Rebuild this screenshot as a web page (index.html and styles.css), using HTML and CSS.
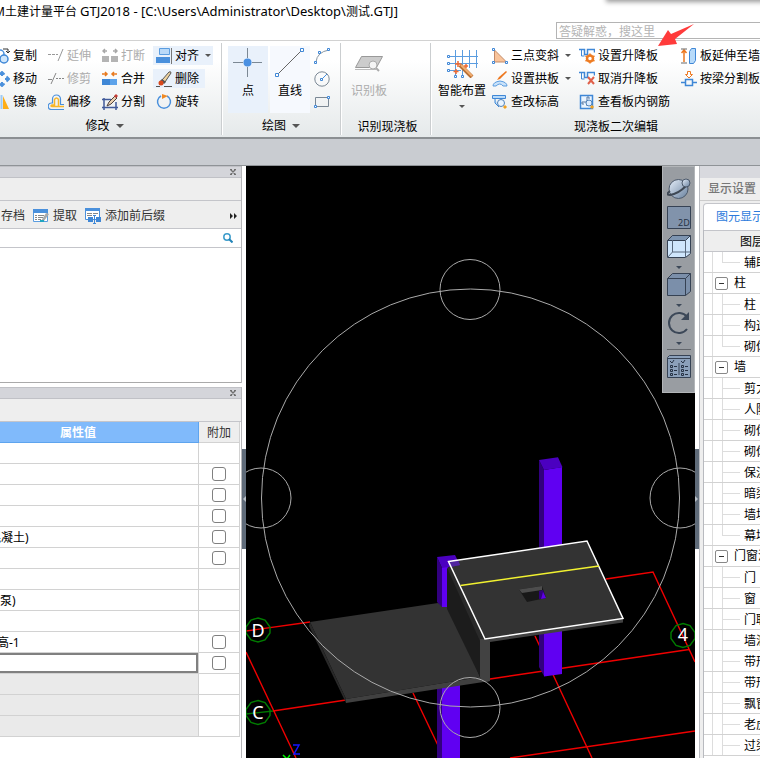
FILE: index.html
```html
<!DOCTYPE html>
<html lang="zh-CN">
<head>
<meta charset="utf-8">
<title>GTJ2018</title>
<link rel="stylesheet" href="styles.css">
</head>
<body>
<header class="titlebar">
  <h1 class="title">M土建计量平台 <span class="path">GTJ2018 - [C:\Users\Administrator\Desktop\</span>测试<span class="path">.GTJ]</span></h1>
  <div class="search-row"><input class="help-search" type="text" aria-label="搜索" placeholder="答疑解惑，搜这里"></div>
  <div class="top-shadow"></div>
</header>

<nav class="ribbon">
  <section class="group group-modify">
    <div class="tools modify-grid">
      <button class="tool"><svg class="icon" viewBox="0 0 16 16"><circle cx="6" cy="6" r="4" fill="#fff" stroke="#4a90dc" stroke-width="1.5"/><circle cx="10" cy="11" r="4" fill="#cfe6fb" stroke="#3f87d6" stroke-width="1.5"/><path d="M9 1h5v4M12 3l2 2 2-2" fill="none" stroke="#333"/></svg>复制</button>
      <button class="tool off"><svg class="icon" viewBox="0 0 16 16"><path d="M0 6.500h3M4 6.500h3M8 6.500h2M10 13l5-12" fill="none" stroke="#999"/></svg>延伸</button>
      <button class="tool off"><svg class="icon" viewBox="0 0 16 16"><path d="M0 8h7v6H0zM9 8h7v6H9z" fill="#b4b4b4"/><path d="M1 3h4M3 1L1 3l2 2M11 3h4M13 1l2 2-2 2" fill="none" stroke="#a8a8a8" stroke-width="1.500"/></svg>打断</button>
      <button class="tool hot split"><svg class="icon" viewBox="0 0 16 16"><path d="M3.500.500h10v6h-10z" fill="#b9d9f8" stroke="#5b9de0"/><path d="M0 9h14v6H0z" fill="#4a90dc"/><path d="M15.500 0v16" stroke="#777"/></svg>对齐<i class="caret"></i></button>
      <button class="tool"><svg class="icon" viewBox="0 0 16 16"><path d="M8 1v4M8 15v-4M1 8h4M15 8h-4M5.500 3.500L8 1l2.500 2.500M5.500 12.500L8 15l2.500-2.500M12.500 5.500L15 8l-2.500 2.500" fill="none" stroke="#4a90dc" stroke-width="2"/></svg>移动</button>
      <button class="tool off"><svg class="icon" viewBox="0 0 16 16"><path d="M0 8.500h4M3 13L8 2M8 7.500h2M11 7.500h2M14 7.500h2" fill="none" stroke="#888"/></svg>修剪</button>
      <button class="tool"><svg class="icon" viewBox="0 0 16 16"><path d="M0 8h8v6H0z" fill="#3f87d6"/><path d="M8 8h7v6H8z" fill="#5da3ea"/><path d="M0 3h4M3 1l2 2-2 2M15 3h-4M12 1l-2 2 2 2" fill="none" stroke="#e87a1f" stroke-width="1.500"/></svg>合并</button>
      <button class="tool hot"><svg class="icon" viewBox="0 0 16 16"><path d="M6 9L13 1q2-1 2 1L9 11z" fill="#efd3a0" stroke="#555"/><path d="M6 8l4 3-2 2-4-3z" fill="#555"/><circle cx="5" cy="12" r="2.500" fill="#d8481c"/><path d="M0 15.500h4M8 15.500h8" stroke="#555"/></svg>删除</button>
      <button class="tool"><svg class="icon" viewBox="0 0 16 16"><path d="M7.500 1v14" stroke="#9ecbf4" stroke-width="2"/><path d="M9 2v13h6z" fill="#ffae17"/></svg>镜像</button>
      <button class="tool"><svg class="icon" viewBox="0 0 16 16"><path d="M16 10.500h-3.500V5a4 4 0 0 0-8 0v4H3.500a3 3 0 0 0 0 6.500H16" fill="none" stroke="#4a90dc" stroke-width="1.200"/><path d="M16 12.500H10.500V5.500q-2-3-4 0v5.500H4q-2 1 0 1.500h7" fill="none" stroke="#f7b62a" stroke-width="1.500"/></svg>偏移</button>
      <button class="tool"><svg class="icon" viewBox="0 0 16 16"><path d="M2 4v12M0 5.500h9M0 13.500h16M14 8v8" fill="none" stroke="#425b9b" stroke-width="1.500"/><path d="M5 12l2-4 6-6 2 2-6 6z" fill="#ead0b0" stroke="#4d4140"/><path d="M12 2l2-2 2 2-2 2z" fill="#c43c35"/></svg>分割</button>
      <button class="tool"><svg class="icon" viewBox="0 0 16 16"><path d="M5 2a6.500 6.500 0 1 0 6 0" fill="none" stroke="#4a90dc" stroke-width="1.500"/><path d="M6 0l6 2-6 3z" fill="#f08a24"/></svg>旋转</button>
    </div>
    <h2 class="group-label">修改<i class="caret big"></i></h2>
  </section>

  <section class="group group-draw">
    <div class="tools draw-tools">
      <button class="large hot"><svg class="icon-lg" viewBox="0 0 32 32"><path d="M15.500 2v10M15.500 21v10M1 16.500h10M20 16.500h10" stroke="#7b8894"/><circle cx="15.500" cy="16.500" r="4" fill="#4a90e2"/></svg>点</button>
      <button class="large warm"><svg class="icon-lg" viewBox="0 0 32 32"><path d="M4 28L28 4" stroke="#666"/><path d="M1.500 27.500h3v3h-3zM26.500 2.500h3v3h-3z" fill="#fff" stroke="#3f87d6"/></svg>直线</button>
      <div class="draw-mini">
        <button class="mini" aria-label="弧"><svg class="icon" viewBox="0 0 16 16"><path d="M2 14Q3 4 15 2" fill="none" stroke="#8795a1"/><path d="M.500 13.500h2v2h-2zM4.500 3.500h2v2h-2zM13.500.500h2v2h-2z" fill="#fff" stroke="#3f87d6"/></svg></button>
        <button class="mini" aria-label="圆"><svg class="icon" viewBox="0 0 16 16"><circle cx="8" cy="8" r="7.200" fill="none" stroke="#7b8894"/><path d="M8 8l5-5" stroke="#4a90dc"/><path d="M6.500 7.500h2v2h-2z" fill="#fff" stroke="#3f87d6"/></svg></button>
        <button class="mini" aria-label="矩形"><svg class="icon" viewBox="0 0 16 16"><path d="M1.500 3.500h13v9h-13z" fill="none" stroke="#7b8894"/><path d="M.500 11.500h2v2h-2zM13.500 2.500h2v2h-2z" fill="#fff" stroke="#3f87d6"/></svg></button>
      </div>
    </div>
    <h2 class="group-label">绘图<i class="caret big"></i></h2>
  </section>

  <section class="group group-detect">
    <div class="tools">
      <button class="large off"><svg class="icon-lg" viewBox="0 0 32 32"><path d="M8.500 10.500h21l-6 11h-21z" fill="#ccc" stroke="#999"/><path d="M2 23.500h21" stroke="#bbb"/><circle cx="20" cy="19" r="4" fill="#f4f4f4" stroke="#aaa"/><path d="M23 22l3 3" stroke="#aaa" stroke-width="2"/></svg>识别板</button>
    </div>
    <h2 class="group-label low">识别现浇板</h2>
  </section>

  <section class="group group-edit">
    <div class="tools edit-tools">
      <button class="large smart"><svg class="icon-lg" viewBox="0 0 32 32"><path d="M9.500 4v25M16.500 4v25M23.500 4v18M30.500 4v18M3 10.500h29M3 17.500h29M3 24.500h12" fill="none" stroke="#5b9de0"/><path d="M1.500 9.500h2v2h-2zM1.500 16.500h2v2h-2zM1.500 23.500h2v2h-2zM8.500 29.500h2v2h-2zM15.500 29.500h2v2h-2z" fill="#fff" stroke="#3f87d6"/><path d="M14 19l12 12" stroke="#b86f34" stroke-width="4"/><path d="M15 19l11 11" stroke="#f1ad70" stroke-width="2"/><path d="M12 15v6M9 18h6M10 23v5M7.500 25.500h5M20 18v4M18 20h4" stroke="#ef6a30" stroke-width="1.500"/></svg>智能布置<i class="caret"></i></button>
      <div class="edit-grid">
        <button class="tool split"><svg class="icon" viewBox="0 0 16 16"><path d="M2.500 2v12h12z" fill="#f9c49b" stroke="#c38b69"/><path d="M.500.500h2v2h-2zM.500 13.500h2v2h-2zM13.500 13.500h2v2h-2z" fill="#fff" stroke="#3f87d6"/></svg>三点变斜<i class="caret"></i></button>
        <button class="tool"><svg class="icon" viewBox="0 0 16 16"><path d="M0 1.500h5.500v5h3v-5h7v3" fill="none" stroke="#3f87d6" stroke-width="1.500"/><path d="M2.500 2v6h3" fill="none" stroke="#3f87d6"/><circle cx="11" cy="10.500" r="3" fill="#fff" stroke="#ee7c22" stroke-width="2.500"/><path d="M11 5.500v2M11 13.500v2M6.500 8l2 1M6.500 13l2-1M15.500 8l-2 1M15.500 13l-2-1" stroke="#ee7c22" stroke-width="1.500"/></svg>设置升降板</button>
        <button class="tool"><svg class="icon" viewBox="0 0 16 16"><path d="M3 14V3M.500 5L3 2l2.500 3" fill="none" stroke="#ed7820" stroke-width="1.500"/><path d="M0 1h6M0 15h6" stroke="#666"/><path d="M8.500 15.500V3.500l2-3h4v12l-2 3z" fill="#b8dbfa" stroke="#3f87d6"/></svg>板延伸至墙</button>
        <button class="tool split"><svg class="icon" viewBox="0 0 16 16"><path d="M1 15q0-4 7-5 7 1 7 5h-4q-3-4-7 0z" fill="#c9e2fa" stroke="#5b9de0"/><path d="M5 9l2-3 7-6 1 1-7 7z" fill="#ed7820"/></svg>设置拱板<i class="caret"></i></button>
        <button class="tool"><svg class="icon" viewBox="0 0 16 16"><path d="M0 1.500h5.500v5h3v-5h7v3" fill="none" stroke="#3f87d6" stroke-width="1.500"/><path d="M2.500 2v6h3" fill="none" stroke="#3f87d6"/><path d="M9 6l6 7M15 6l-6 7" stroke="#e0604a" stroke-width="2"/></svg>取消升降板</button>
        <button class="tool"><svg class="icon" viewBox="0 0 16 16"><path d="M6.500.500h3v3h2L8 7 4.500 3.500h2z" fill="#fff" stroke="#ed7820"/><path d="M0 11.500h4M12 11.500h4M4.500 8.500h7v6h-7z" fill="none" stroke="#3f87d6" stroke-width="1.500"/></svg>按梁分割板</button>
        <button class="tool"><svg class="icon" viewBox="0 0 16 16"><path d="M.500 1.500h13v3h-13zM3 5v4l4 4" fill="#b8dbfa" stroke="#3f87d6"/><circle cx="9" cy="9" r="3.500" fill="#e9f4ff" stroke="#5182b8"/><path d="M12 12l2 2" stroke="#f0a020" stroke-width="3"/></svg>查改标高</button>
        <button class="tool"><svg class="icon" viewBox="0 0 16 16"><path d="M1.500 1.500h12v13h-12z" fill="#eaf4ff" stroke="#3f87d6" stroke-width="1.500"/><path d="M3 8h6M8 3v9M8 3h2v2M3 8v2h2" fill="none" stroke="#5677a0"/><circle cx="10" cy="9" r="3" fill="#dcecff" stroke="#5182b8"/><path d="M12 12l2 2" stroke="#f0a020" stroke-width="3"/></svg>查看板内钢筋</button>
      </div>
    </div>
    <h2 class="group-label low">现浇板二次编辑</h2>
  </section>
</nav>
<div class="band"></div>

<svg class="pointer" viewBox="0 0 36 22" aria-hidden="true"><path d="M0 22L10 6l3 4L36 0 17 15l2 5z" fill="#ff3b3b"/></svg>

<main class="workspace">
  <aside class="left">
    <section class="panel">
      <div class="panel-title"><button class="close" aria-label="关闭"><svg viewBox="0 0 6 6"><path d="M0 .500h2M4 .500h2M1 1l4 4M5 1L1 5M0 5.500h2M4 5.500h2" stroke="#707070" stroke-width="1.300" fill="none"/></svg></button></div>
      <div class="panel-strip"></div>
      <div class="panel-tools">
        <button class="ptool">存档</button>
        <button class="ptool"><svg class="icon" viewBox="0 0 16 16"><path d="M.500 2.500h14v11H.500z" fill="#fff" stroke="#5b9de0"/><path d="M0 1h15v4H0z" fill="#4a90dc"/><path d="M2 7.500h2M5 7.500h6M2 9.500h2M5 9.500h5M2 11.500h2M5 11.500h3" stroke="#888"/><path d="M8 13l5-8 3 1-5 7z" fill="#aaa"/><path d="M7 13h4" stroke="#20a5c0" stroke-width="2"/></svg>提取</button>
        <button class="ptool"><svg class="icon" viewBox="0 0 16 16"><path d="M.500 1.500h14v10H.500z" fill="#fff" stroke="#4a90dc"/><path d="M0 0h15v3H0z" fill="#4a90dc"/><path d="M2 5.500h5M8 5.500h5M2 7.500h5" stroke="#888"/><path d="M3 9h5v5H3zM11 9h5v5h-5z" fill="#3f87d6"/><path d="M8 7.500h3M9.500 7v8M8 15.500h3" stroke="#3f87d6"/></svg>添加前后缀</button>
        <button class="more" aria-label="更多"><svg viewBox="0 0 8 6"><path d="M0 0l3 3-3 3zM4 0l3 3-3 3z" fill="#222"/></svg></button>
      </div>
      <div class="filter"><input type="text" aria-label="搜索构件"><svg class="lens" viewBox="0 0 10 10"><circle cx="4" cy="4" r="3.200" fill="#fff" stroke="#3c9ccb" stroke-width="1.500"/><path d="M6 6l3.500 3.500" stroke="#2384b8" stroke-width="2"/></svg></div>
      <div class="list"></div>
    </section>
    <section class="panel props">
      <div class="panel-title"><button class="close" aria-label="关闭"><svg viewBox="0 0 6 6"><path d="M0 .500h2M4 .500h2M1 1l4 4M5 1L1 5M0 5.500h2M4 5.500h2" stroke="#707070" stroke-width="1.300" fill="none"/></svg></button></div>
      <div class="panel-strip"></div>
      <table class="prop-table">
        <thead><tr><th class="value-head">属性值</th><th class="extra-head">附加</th></tr></thead>
        <tbody>
          <tr><td></td><td></td></tr>
          <tr><td></td><td><input type="checkbox" aria-label="附加"></td></tr>
          <tr><td></td><td><input type="checkbox" aria-label="附加"></td></tr>
          <tr><td></td><td><input type="checkbox" aria-label="附加"></td></tr>
          <tr><td><span class="cut">混凝土)</span></td><td><input type="checkbox" aria-label="附加"></td></tr>
          <tr><td></td><td><input type="checkbox" aria-label="附加"></td></tr>
          <tr><td></td><td></td></tr>
          <tr><td>泵)</td><td></td></tr>
          <tr><td></td><td></td></tr>
          <tr><td><span class="cut-less">高-1</span></td><td><input type="checkbox" aria-label="附加"></td></tr>
          <tr><td class="editing"><input class="cell-edit" type="text" aria-label="属性值"></td><td><input type="checkbox" aria-label="附加"></td></tr>
          <tr class="locked"><td></td><td></td></tr>
          <tr class="locked"><td></td><td></td></tr>
          <tr class="locked"><td></td><td></td></tr>
        </tbody>
      </table>
    </section>
  </aside>
  <div class="gutter"><button class="handle" aria-label="折叠左栏"><svg viewBox="0 0 4 8"><path d="M4 1v6L1 4z" fill="#b9c0c8"/></svg></button></div>

  <section class="view">
    <svg class="scene" viewBox="246 166 449 592" preserveAspectRatio="xMinYMin slice">
      <g stroke="#f00000" stroke-width="1.400" fill="none">
        <path d="M246 631L310 622M606 579L653 572L695 662M273 711L346 700M490 679L689 649.500M246 652L296 758M413 693L444 758M535 636L592 758M510 758L695 731"/>
      </g>
      <path d="M246 714L273 711" stroke="#007800" stroke-width="1.400"/>
      <path d="M539 460l5 10v206l-5-9z" fill="#32007f"/>
      <path d="M544 470l18-3v207l-18 2.500z" fill="#6000f2"/>
      <path d="M539 460l19-2.700 4.500 10L544 470z" fill="#4b00c0"/>
      <path d="M437 684h5v74h-5z" fill="#32007f"/><path d="M442 684h18v74h-18z" fill="#6000f2"/>
      <path d="M310 622L438 603l14 4 28 70-134 22z" fill="#333"/>
      <path d="M310 622l36 77v4l-37-77z" fill="#292929"/>
      <path d="M346 699L480 677l10 4L346 703z" fill="#404040"/>
      <path d="M437 557l5 11v39l-5-5z" fill="#32007f"/><path d="M442 567h6v40h-6z" fill="#6000f2"/>
      <path d="M447 567l33 70v40l-33-68z" fill="#1c1c1c"/>
      <path d="M448 562l37 77-5 2-32-71z" fill="#292929"/>
      <path d="M480 639h10v42l-5 1-5-5z" fill="#424242"/>
      <path d="M485 639l138-21v4.500L490 642z" fill="#424242"/>
      <path d="M448.500 561.500L587 541l36 77.500L485 639z" fill="#333"/>
      <path d="M437 557l18-2 5 10-18 3z" fill="#4b00c0"/><path d="M449 561l9-1 2 5-9 2z" fill="#5125a0"/>
      <path d="M519 589.500l23-3.500 4 12-19 4z" fill="#181818"/><path d="M519 589.500l23-3.500v4l-20 3z" fill="#4d4d4d"/>
      <path d="M539 591l4-1 3 8-7 1z" fill="#32007f"/><path d="M542 596l1-4 3 6-5 1z" fill="#6000e8"/>
      <path d="M448.500 561.500L587 541l36 77.500L485 639z" fill="none" stroke="#fff" stroke-width="1.500"/>
      <path d="M460.500 585.500L599 566" stroke="#f2f230" stroke-width="1.500"/>
      <g fill="none" stroke="#aaa"><circle cx="470.500" cy="498" r="209"/><circle cx="470" cy="289.500" r="30"/><circle cx="470" cy="707.500" r="30"/><circle cx="261" cy="498" r="30"/><circle cx="680" cy="498" r="30"/></g>
      <g fill="none" stroke="#007c00" stroke-width="1.400"><path d="M258 618l7 2 5 7v6l-5 7-7 2-7-2-5-7v-6l5-7zM258 700.500l7 2 5 7v6l-5 7-7 2-7-2-5-7v-6l5-7zM683 623.500l7 2 5 7v6l-5 7-7 2-7-2-5-7v-6l5-7z"/></g>
      <g class="axis-text" fill="#fff" text-anchor="middle"><text x="258" y="637">D</text><text x="258" y="719">C</text><text x="683" y="641">4</text></g>
      <path d="M293 745h6l-5 9h6" fill="none" stroke="#1414ff" stroke-width="1.500"/><path d="M283 755l4 4 3-4" fill="none" stroke="#00f000" stroke-width="1.500"/>
    </svg>
    <div class="viewbar">
      <button class="vbtn" aria-label="动态观察"><svg viewBox="0 0 24 24"><defs><linearGradient id="ball" x2="1" y2="1"><stop stop-color="#e6effa"/><stop offset="1" stop-color="#68809d"/></linearGradient></defs><circle cx="11.500" cy="12" r="9.500" fill="url(#ball)" stroke="#4c596b"/><path d="M3 14q-5 4 0 4 8-1 16-9" fill="none" stroke="#3f4854" stroke-width="2"/><circle cx="19" cy="6" r="4" fill="url(#ball)" stroke="#4c596b"/></svg></button>
      <button class="vbtn" aria-label="二维"><svg viewBox="0 0 24 24"><path d="M.500.500h23v22H.500z" fill="#8193ab" stroke="#364254"/><text class="two-d" x="11" y="20">2D</text></svg></button>
      <button class="vbtn" aria-label="线框"><svg viewBox="0 0 24 24"><path d="M.500 5.500l5-5h18v18l-5 4H.500z" fill="#cfe6fc" stroke="#364254"/><path d="M.500 5.500l5-5h18l-5 5z" fill="#7e95b1" stroke="#364254"/><path d="M18.500 5.500v17M5.500 5v12h18M.500 22.500l5-5.500" fill="none" stroke="#58687c"/></svg></button>
      <i class="caret dark"></i>
      <button class="vbtn" aria-label="实体"><svg viewBox="0 0 24 24"><path d="M.500 5.500l5-5h18v18l-5 4H.500z" fill="#7b8faa" stroke="#364254"/><path d="M.500 5.500h18v17M18.500 5.500l5-5" fill="none" stroke="#364254"/></svg></button>
      <i class="caret dark"></i>
      <button class="vbtn" aria-label="旋转"><svg viewBox="0 0 24 24"><path d="M20 6A10 10 0 1 0 20 18" fill="none" stroke="#3c4858" stroke-width="2"/><path d="M22 1v8h-8z" fill="#3c4858"/></svg></button>
      <i class="caret dark"></i>
      <hr class="vline">
      <button class="vbtn" aria-label="显示设置"><svg viewBox="0 0 24 24"><path d="M.500 2.500l2-2h21v22H.500z" fill="#8ba0ba" stroke="#364254"/><path d="M1 3.500h22M12 8v12" stroke="#364254"/><path d="M3 6l2 2 2-3M14 6l2 2 2-3" fill="none" stroke="#263244"/><path d="M3.500 10.500h2v2h-2zM3.500 14.500h2v2h-2zM3.500 18.500h2v2h-2zM14.500 10.500h2v2h-2zM14.500 14.500h2v2h-2zM14.500 18.500h2v2h-2zM7 11.500h3M7 15.500h3M7 19.500h3M18 11.500h3M18 15.500h3M18 19.500h3" fill="none" stroke="#263244"/></svg></button>
    </div>
  </section>

  <div class="gutter right-gutter"><button class="handle" aria-label="折叠右栏"><svg viewBox="0 0 4 8"><path d="M0 1v6l3-3z" fill="#b9c0c8"/></svg></button></div>
  <aside class="right">
    <div class="dock-band"></div>
    <h2 class="dock-title">显示设置</h2>
    <div class="tabs"><button class="tab">图元显示</button></div>
    <div class="tree">
      <div class="tree-head">图层</div>
      <ul class="tree-list">
        <li class="leaf last">辅助</li>
        <li class="node"><button class="fold" aria-label="折叠"></button>柱</li>
        <li class="leaf">柱</li>
        <li class="leaf">构造</li>
        <li class="leaf last">砌体</li>
        <li class="node"><button class="fold" aria-label="折叠"></button>墙</li>
        <li class="leaf">剪力</li>
        <li class="leaf">人防</li>
        <li class="leaf">砌体</li>
        <li class="leaf">砌体</li>
        <li class="leaf">保温</li>
        <li class="leaf">暗梁</li>
        <li class="leaf">墙垛</li>
        <li class="leaf last">幕墙</li>
        <li class="node"><button class="fold" aria-label="折叠"></button>门窗洞</li>
        <li class="leaf">门</li>
        <li class="leaf">窗</li>
        <li class="leaf">门联</li>
        <li class="leaf">墙洞</li>
        <li class="leaf">带形</li>
        <li class="leaf">带形</li>
        <li class="leaf">飘窗</li>
        <li class="leaf">老虎</li>
        <li class="leaf">过梁</li>
      </ul>
    </div>
  </aside>
</main>
</body>
</html>
```
FILE: styles.css
```css
* { box-sizing: border-box; }
body {
  margin: 0;
  height: 100vh;
  display: flex;
  flex-direction: column;
  overflow: hidden;
  position: relative;
  background: #fff;
  color: #000;
  font: 12px/16px "Noto Sans", "Noto Sans CJK SC", sans-serif;
}
button, input { font: inherit; color: inherit; margin: 0; padding: 0; border: 0; background: none; }
h1, h2, ul { margin: 0; padding: 0; font-size: 12px; font-weight: 400; list-style: none; }
svg { display: block; flex: none; }

/* title bar */
.titlebar { flex: none; height: 41px; border-bottom: 1px solid #d2d2d2; position: relative; overflow: hidden; }
.title { height: 22px; line-height: 22px; margin-left: -6px; white-space: nowrap; }
.path { font-size: 13px; }
.search-row { display: flex; justify-content: flex-end; margin-right: -2px; }
.help-search { width: 206px; height: 17px; border: 1px solid #b4b4b4; padding: 1px 0 0 2px; }
.help-search::placeholder { color: #b4b4b4; opacity: 1; }
.top-shadow { position: absolute; top: -8px; right: -8px; width: 160px; height: 8px; box-shadow: 0 0 5px 2px #999; }
.pointer { position: absolute; left: 658px; top: 24px; width: 36px; height: 22px; }

/* ribbon */
.ribbon {
  flex: none;
  display: flex;
  height: 98px;
  overflow: hidden;
  background: linear-gradient(#fff 0, #fff 20%, #e5e9ea 100%);
  border-bottom: 2px solid #8b8f92;
}
.group { flex: none; display: flex; flex-direction: column; border-right: 1px solid #cbced0; box-shadow: 1px 0 #fff; padding-top: 5px; margin: 2px 0 2px; padding-top: 3px; }
.group-modify { width: 238px; margin-left: -16px; padding-left: 10px; }
.group-draw { width: 119px; padding-left: 6px; }
.group-detect { width: 90px; padding-left: 8px; }
.group-edit { width: 371px; padding-left: 6px; }
.tools { height: 69px; display: flex; }
.modify-grid { display: grid; grid-template-columns: 54px 54px 51px 60px; grid-template-rows: repeat(3, 19px); row-gap: 4px; justify-items: start; }
.tool { display: flex; align-items: center; gap: 3px; height: 19px; white-space: nowrap; }
.icon { width: 16px; height: 16px; }
.off { color: #adadad; }
.tool.hot { padding: 0 6px 0 3px; }
.modify-grid .tool:nth-child(12) { padding-left: 3px; }
.tool.split.hot { padding-right: 2px; }
.hot { background: #e9f1fb; }
.warm { background: #f6f9fe; }
.caret { width: 0; height: 0; border: 3px solid transparent; border-top-color: #555; border-bottom: 0; margin-left: 3px; }
.caret.big { border-width: 4px 4px 0; margin-left: 6px; }
.caret.dark { margin: 7px 0 4px; border-top-color: #3c4858; }
.group-label { display: flex; align-items: center; justify-content: center; height: 22px; padding-top: 4px; }
.group-modify .group-label { padding-right: 6px; }
.group-draw .group-label, .group-edit .group-label { padding-right: 6px; }
.group-detect .group-label { padding-right: 4px; }
.group-label.low { padding-top: 6px; }
.draw-tools { gap: 2px; }
.large { width: 40px; height: 67px; display: flex; flex-direction: column; align-items: center; white-space: nowrap; }
.icon-lg { width: 32px; height: 32px; margin-bottom: 5px; }
.smart { width: 50px; }
.smart .caret { margin: 6px 0 0; }
.draw-mini { display: grid; grid-template-rows: repeat(3, 19px); row-gap: 4px; padding-left: 2px; align-items: center; }
.edit-tools { gap: 5px; }
.edit-grid { display: grid; grid-template-columns: 87px 102px 80px; grid-template-rows: repeat(3, 19px); row-gap: 4px; }
.band { flex: none; height: 27px; background: #c9ccd1; border-bottom: 1px solid #8f9397; }

/* workspace */
.workspace { flex: 1; min-height: 0; display: flex; }
.left { flex: none; width: 242px; overflow: hidden; }
.panel { border-right: 1px solid #b5b5b8; }
.panel-title { height: 12px; display: flex; align-items: center; justify-content: flex-end; padding-right: 5px; background: #d4d5da; border: solid #c0c1c6; border-width: 1px 0; }
.close svg { width: 6px; height: 6px; }
.panel-strip { height: 23px; background: #eee; border-bottom: 1px solid #c4c5ca; }
.panel-tools { height: 28px; display: flex; align-items: center; gap: 8px; background: #eee; border-bottom: 1px solid #c4c5ca; padding: 2px 3px 0 1px; }
.ptool { display: flex; align-items: center; gap: 4px; color: #333; white-space: nowrap; }
.more { margin-left: auto; }
.more svg { width: 8px; height: 6px; }
.filter { height: 19px; display: flex; align-items: center; border-bottom: 1px solid #c4c5ca; padding-right: 8px; }
.filter input { flex: 1; min-width: 0; }
.lens { width: 10px; height: 10px; }
.list { height: 135px; border-bottom: 1px solid #aaa; }
.props { margin-top: 4px; height: 100%; }
.prop-table { width: 240px; border-collapse: separate; border-spacing: 0; table-layout: fixed; }
.prop-table tr { height: 21px; }
.prop-table th, .prop-table td { height: 21px; padding: 2px 0 0; border: solid #d2d2d2; border-width: 0 1px 1px 0; overflow: hidden; white-space: nowrap; line-height: 16px; }
.prop-table .value-head { width: 199px; background: #80bafb; color: #fff; border-color: #5ea4ee; text-align: right; padding-right: 102px; }
.prop-table .extra-head { background: #eee; color: #333; font-weight: 400; }
.prop-table td:nth-child(2), .prop-table .editing { padding: 0; text-align: center; }
.cut { display: block; margin-left: -11px; }
.cut-less { display: block; margin-left: -3px; }
.locked td:first-child { background: #eaeaea; }
.prop-table input[type="checkbox"] { appearance: none; display: block; width: 14px; height: 14px; margin: 0 auto; border: 1px solid #808080; border-radius: 3px; background: #fff; }
.cell-edit { display: block; width: 100%; height: 20px; border: 2px solid #808080; border-left: 0; }

.gutter { flex: none; width: 4px; padding-top: 283px; }
.handle { display: flex; align-items: center; width: 4px; height: 100px; background: #5f6b79; }
.handle svg { width: 4px; height: 8px; }

.view { flex: 1; min-width: 0; position: relative; background: #000; overflow: hidden; }
.scene { width: 100%; height: 100%; }
.axis-text { font-size: 18px; }
.viewbar { position: absolute; top: 0; right: 0; width: 33px; height: 227px; padding-top: 10px; display: flex; flex-direction: column; align-items: center; background: #999da2; border: 1px solid #b2b5b8; }
.vbtn svg { width: 24px; height: 24px; }
.vbtn + .vbtn { margin-top: 5px; }
.two-d { font-size: 9px; fill: #263244; }
.vline { width: 24px; border: 0; border-top: 1px solid #62666b; margin: 0 0 5px; }

.right { flex: none; width: 61px; overflow: hidden; border-left: 1px solid #b8babf; background: #eee; display: flex; flex-direction: column; }
.dock-band { height: 12px; background: #d8d9de; flex: none; }
.dock-title { flex: none; height: 23px; line-height: 21px; padding-left: 8px; color: #777; font-weight: 500; white-space: nowrap; border-bottom: 1px solid #ccc; }
.tabs { flex: none; height: 29px; padding: 2px 0 0 3px; }
.tab { width: 80px; height: 27px; background: #fff; border: 1px solid #c4c5ca; border-bottom: 0; border-radius: 4px 0 0; padding-left: 12px; text-align: left; color: #2d7bdc; white-space: nowrap; }
.tree { flex: 1; margin-left: 3px; background: #fff; border-left: 1px solid #b8babf; }
.tree-head { height: 22px; line-height: 22px; padding-left: 36px; background: #eee; border: solid #c4c5ca; border-width: 1px 0; white-space: nowrap; }
.tree-list li { position: relative; height: 21px; line-height: 22px; border-bottom: 1px solid #d2d2d2; white-space: nowrap; background: linear-gradient(#ddd, #ddd) 8px 0 / 1px 100% no-repeat; }
.leaf { padding-left: 40px; }
.leaf::before { content: ""; position: absolute; left: 18px; top: 0; width: 17px; height: 10px; border: solid #ddd; border-width: 0 0 1px 1px; }
.leaf:not(.last)::after { content: ""; position: absolute; left: 18px; top: 10px; height: 10px; border-left: 1px solid #ddd; }
.node { display: flex; align-items: center; gap: 6px; padding-left: 11px; }
.fold { flex: none; width: 13px; height: 13px; border: 1px solid #888; border-radius: 2px; background: linear-gradient(#333, #333) center / 5px 1px no-repeat #fff; }
```
